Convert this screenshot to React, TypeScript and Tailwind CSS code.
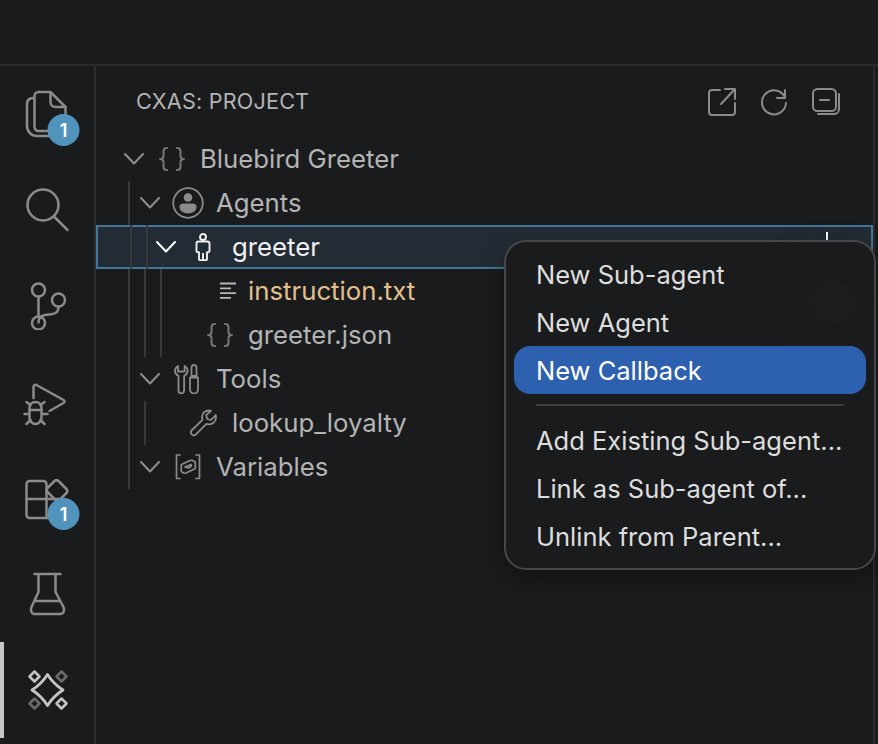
import React from "react";

const S = ({ children, size = 48, cls = "", color = "#8b8b8b", w = 2.5 }: any) => (
  <svg width={size} height={size} viewBox={`0 0 ${size} ${size}`} fill="none" stroke={color} strokeWidth={w} strokeLinecap="round" strokeLinejoin="round" className={cls}>
    {children}
  </svg>
);

const Badge = () => (
  <span className="absolute left-[24px] top-[24px] flex h-8 w-8 items-center justify-center rounded-full bg-[#5193bd] text-[18px] font-semibold text-white">1</span>
);

const activity = [
  {
    icon: (
      <S>
        <path d="M15 2h12l15 15v20a4 4 0 0 1-4 4H15a4 4 0 0 1-4-4V6a4 4 0 0 1 4-4z" />
        <path d="M27 2v10a5 5 0 0 0 5 5h10" />
        <path d="M10 8c-4 0-6.500 2-6.500 6v22a10 10 0 0 0 10 10h22" />
      </S>
    ),
    badge: true,
  },
  {
    icon: (
      <S>
        <circle cx="19.5" cy="19" r="15.5" />
        <path d="M31 31l13 13" />
      </S>
    ),
  },
  {
    icon: (
      <S cls="translate-x-[1px]">
        <circle cx="14" cy="8" r="6.5" />
        <circle cx="14" cy="41" r="6.5" />
        <circle cx="34" cy="18" r="6.5" />
        <path d="M14 15v19" />
        <path d="M34 25c0 6-4 7-9 7.5-6 .5-11 1-11 8" />
      </S>
    ),
  },
  {
    icon: (
      <S>
        <path d="M10 20V9c0-2 1.500-2.500 3-2l27 15c1.500 1 1.500 2 0 3L26 33" />
        <path d="M6 30c0-4 3-6 6-6s6 2 6 6v10c0 3-3 6-6 6s-6-3-6-6z" />
        <path d="M6 32h12M7 27l-4-3M17 27l4-3M5 36H0M19 36h5M7 42l-4 4M17 42l4 4" />
      </S>
    ),
  },
  {
    icon: (
      <S>
        <path d="M6 7h14a3 3 0 0 1 3 3v34H6a3 3 0 0 1-3-3V10a3 3 0 0 1 3-3z" />
        <path d="M3 25h38M23 44h14M41 25v10" />
        <path d="M24 14l7-7a3 3 0 0 1 4 0l8 8a3 3 0 0 1 0 4l-7 7a3 3 0 0 1-4 0l-8-8a3 3 0 0 1 0-4z" />
      </S>
    ),
    badge: true,
  },
  {
    icon: (
      <S>
        <path d="M11 4h26M15 4v18L8 37c-1.500 3 0 7 3 7h26c3 0 4.500-4 3-7L32 22V4" />
        <path d="M12 31h24" />
      </S>
    ),
  },
  {
    icon: (
      <S color="#c4c4c4">
        <path d="M24 8.500Q30 18 39.500 24 30 30 24 39.500 18 30 8.500 24 18 18 24 8.500z" strokeWidth="2.800" />
        <path d="M11 5.500l5 5-5 5-5-5z" />
        <path d="M38 32.500l5 5-5 5-5-5z" />
        <path d="M38 5.500l5 5-5 5-5-5z" stroke="#6a6a6a" />
        <path d="M11 32.500l5 5-5 5-5-5z" stroke="#6a6a6a" />
      </S>
    ),
    active: true,
  },
];

const Chevron = ({ white }: { white?: boolean }) => (
  <svg width="20" height="20" viewBox="0 0 20 20" fill="none" stroke={white ? "#ffffff" : "#8e8e8e"} strokeWidth="2" strokeLinecap="round" strokeLinejoin="round" className="shrink-0">
    <path d="M1 5l9 9.500L19 5" />
  </svg>
);

const Braces = () => (
  <svg width="26" height="24" viewBox="0 0 26 24" fill="none" stroke="#777" strokeWidth="2" strokeLinecap="round">
    <path d="M8 1c-2.500 0-3.500 1-3.500 3v5c0 1.500-.8 2.500-2.500 3 1.700.5 2.500 1.500 2.500 3v5c0 2 1 3 3.500 3" />
    <path d="M18 1c2.500 0 3.500 1 3.500 3v5c0 1.500.8 2.500 2.500 3-1.700.5-2.500 1.500-2.500 3v5c0 2-1 3-3.500 3" />
  </svg>
);

const AgentsIcon = () => (
  <svg width="32" height="32" viewBox="0 0 32 32" fill="none">
    <circle cx="16" cy="16" r="14.800" stroke="#8b8b8b" strokeWidth="1.800" />
    <circle cx="16" cy="10.500" r="4.300" fill="#8b8b8b" />
    <path d="M7.500 19.500c0-2 2-3 4-3h9c2 0 4 1 4 3v1a8.500 6 0 0 1-17 0z" fill="#8b8b8b" />
  </svg>
);

const PersonIcon = () => (
  <svg width="16" height="28" viewBox="0 0 16 28" fill="none" stroke="#f0f0f0" strokeWidth="1.900" strokeLinejoin="round" className="-translate-x-[1px]">
    <circle cx="8" cy="4" r="3" />
    <path d="M3.500 8.500h9c1.300 0 2 .8 2 2V18c0 .8-.5 1.200-1.200 1.200H12V26c0 .8-.5 1.200-1.200 1.200H5.200C4.500 27.200 4 26.800 4 26v-6.800H2.700C2 19.200 1.500 18.800 1.500 18v-7.500c0-1.200.7-2 2-2z" />
    <path d="M8 20v7" />
  </svg>
);

const LinesIcon = () => (
  <svg width="18" height="18" viewBox="0 0 18 18" fill="none" stroke="#b8b8b8" strokeWidth="1.800" className="ml-[15px]">
    <path d="M1 1.500h16M1 6.300h11M1 11.100h16M1 15.900h11" />
  </svg>
);

const ToolsIcon = () => (
  <svg width="28" height="30" viewBox="0 0 28 30" fill="none" stroke="#8b8b8b" strokeWidth="1.800" strokeLinejoin="round" strokeLinecap="round">
    <path d="M4 2C1.500 3.500 1 5 1 7c0 2.500 1.500 4 3.500 5v14.500a2.800 2.800 0 0 0 5.600 0V12c2-1 3.500-2.500 3.500-5 0-2-.5-3.500-3-5v5.500H4z" />
    <path d="M20 1a2.500 2.500 0 0 1 2.500 2.500v8.500h-5V3.500A2.500 2.500 0 0 1 20 1z" />
    <path d="M16 13.500h8v12a4 4 0 0 1-8 0z" />
  </svg>
);

const WrenchIcon = () => (
  <svg width="28" height="28" viewBox="0 0 28 28" fill="none" stroke="#8b8b8b" strokeWidth="1.800" strokeLinejoin="round" strokeLinecap="round">
    <path d="M19 1.500c-4 0-7 3-7 6.800 0 1 .2 1.800.5 2.500L2 21c-1.500 1.500-1.500 3 -.3 4.300 1.300 1.300 3 1.300 4.300 0l10.400-10.500c.8.300 1.600.5 2.600.5 4 0 7-3 7-7 0-.8-.1-1.500-.3-2.200L21 11l-3.800-1-1-3.800L21 1.800c-.6-.2-1.300-.3-2-.3z" />
  </svg>
);

const VarIcon = () => (
  <svg width="26" height="26" viewBox="0 0 26 26" fill="none" stroke="#8b8b8b" strokeWidth="1.700" strokeLinejoin="round" strokeLinecap="round">
    <path d="M5 1H1.500v23.500H5M21 1h3.500v23.500H21" />
    <path d="M6.500 10.500L15 6.500c1-.4 1.500-.4 2.500 0l2 1c.5.3.8.7.8 1.300v5c0 .6-.3 1-.8 1.300L11 19c-1 .4-1.500.4-2.500 0l-1.500-1c-.5-.3-.8-.7-.8-1.300v-5c0-.5.200-1 .3-1.200z" />
    <path d="M10 13l6-2.500.5 1.500-3 2z" />
  </svg>
);

type R = { label: string; pad: string; icon: React.ReactNode; chev?: boolean; guides: string[]; selected?: boolean; text?: string };

const rows: R[] = [
  { label: "Bluebird Greeter", pad: "pl-[28px]", icon: <Braces />, chev: true, guides: [] },
  { label: "Agents", pad: "pl-[44px]", icon: <AgentsIcon />, chev: true, guides: ["left-[32px]"] },
  { label: "greeter", pad: "pl-[58px]", icon: <PersonIcon />, chev: true, guides: ["left-[32px]", "left-[48px]"], selected: true },
  { label: "instruction.txt", pad: "pl-[76px]", icon: <LinesIcon />, guides: ["left-[32px]", "left-[48px]", "left-[64px]"], text: "text-[#e2c08d]" },
  { label: "greeter.json", pad: "pl-[76px]", icon: <Braces />, guides: ["left-[32px]", "left-[48px]", "left-[64px]"] },
  { label: "Tools", pad: "pl-[44px]", icon: <ToolsIcon />, chev: true, guides: ["left-[32px]"] },
  { label: "lookup_loyalty", pad: "pl-[60px]", icon: <WrenchIcon />, guides: ["left-[32px]", "left-[48px]"] },
  { label: "Variables", pad: "pl-[44px]", icon: <VarIcon />, chev: true, guides: ["left-[32px]"] },
];

const menuTop = ["New Sub-agent", "New Agent", "New Callback"];
const menuBottom = ["Add Existing Sub-agent...", "Link as Sub-agent of...", "Unlink from Parent..."];

export default function App() {
  return (
    <div className="relative flex h-[744px] w-[878px] flex-col overflow-hidden bg-[#1a1b1d] font-['Inter',sans-serif] text-[25.750px] text-[#b4b4b4]">
      <div className="h-[66px] shrink-0 border-b-2 border-[#2a2b2d]" />
      <div className="flex min-h-0 flex-1">
        <nav className="flex w-[96px] shrink-0 flex-col border-r-2 border-[#2c2d2f]">
          {activity.map((a, i) => (
            <div key={i} className="relative flex h-24 shrink-0 items-center justify-center">
              {a.active && <span className="absolute left-0 top-0 h-full w-[4px] bg-[#c8c8c8]" />}
              <div className="relative h-12 w-12 translate-x-[0.5px]">
                {a.icon}
                {a.badge && <Badge />}
              </div>
            </div>
          ))}
        </nav>
        <section className="relative flex w-[779px] shrink-0 flex-col border-r-2 border-[#2a2b2d]">
          <header className="flex h-[71px] shrink-0 items-center pl-[40px] pr-[33px]">
            <span className="flex-1 text-[21.600px] leading-none tracking-[0.2px] text-[#b4b4b4]">CXAS: PROJECT</span>
            <div className="flex items-center gap-[24px]">
              <svg width="30" height="30" viewBox="0 0 30 30" fill="none" stroke="#8b8b8b" strokeWidth="2" strokeLinecap="round" strokeLinejoin="round" className="translate-x-[1px]">
                <path d="M13 3H5a3 3 0 0 0-3 3v19a3 3 0 0 0 3 3h20a3 3 0 0 0 3-3v-9" />
                <path d="M28 2L14 17M18 2h10v10" />
              </svg>
              <svg width="28" height="28" viewBox="0 0 28 28" fill="none" stroke="#8b8b8b" strokeWidth="2" strokeLinecap="round" strokeLinejoin="round">
                <path d="M25 9.500A12 12 0 1 0 26 15" />
                <path d="M25 2v8h-8" />
              </svg>
              <svg width="28" height="28" viewBox="0 0 28 28" fill="none" stroke="#8b8b8b" strokeWidth="2" strokeLinecap="round" strokeLinejoin="round">
                <rect x="1" y="1" width="23" height="22" rx="4.500" />
                <path d="M8 12h9" />
                <path d="M27 6v15a5 5 0 0 1-5 5H6" />
              </svg>
            </div>
          </header>
          <div className="flex flex-col">
            {rows.map((r) => (
              <div
                key={r.label}
                className={`relative flex h-11 shrink-0 items-center ${r.pad} ${r.selected ? "border-2 border-[#43779a] bg-[#232c35] text-[#f0f0f0]" : ""} ${r.text ?? ""}`}
              >
                {r.guides.map((g) => (
                  <span key={g} className={`absolute h-11 w-[2px] bg-[#38393b] ${g} ${r.selected ? "-top-[2px]" : "top-0"}`} />
                ))}
                {r.chev ? <Chevron white={r.selected} /> : <span className="w-5 shrink-0" />}
                <span className="flex w-[56px] shrink-0 items-center justify-center">{r.icon}</span>
                <span className="whitespace-nowrap leading-none">{r.label}</span>
                {r.selected && <span className="absolute left-[728px] top-[5px] h-[8px] w-[2px] bg-white" />}
              </div>
            ))}
          </div>
        </section>
      </div>

      <div className="absolute left-[504px] top-[240px] flex w-[372px] flex-col rounded-[22px] border-2 border-[#47484a] bg-[#1a1b1d] p-[8px] text-[25.500px] text-[#dedede] shadow-[0_8px_24px_rgba(0,0,0,0.35)]">
        <span className="absolute left-[300px] top-[25px] h-[70px] w-[55px] rounded-full bg-[#2a211a] opacity-50 blur-xl" />
        {menuTop.map((m) => (
          <div key={m} className={`relative flex h-12 items-center rounded-[16px] pl-[22px] pt-[2px] leading-none ${m === "New Callback" ? "bg-[#2e60b0] text-white" : ""}`}>
            {m}
          </div>
        ))}
        <div className="mx-[22px] my-[10px] h-[2px] bg-[#3b3c3e]" />
        {menuBottom.map((m) => (
          <div key={m} className="flex h-12 items-center whitespace-nowrap pl-[22px] pt-[2px] leading-none">
            {m}
          </div>
        ))}
      </div>
    </div>
  );
}
